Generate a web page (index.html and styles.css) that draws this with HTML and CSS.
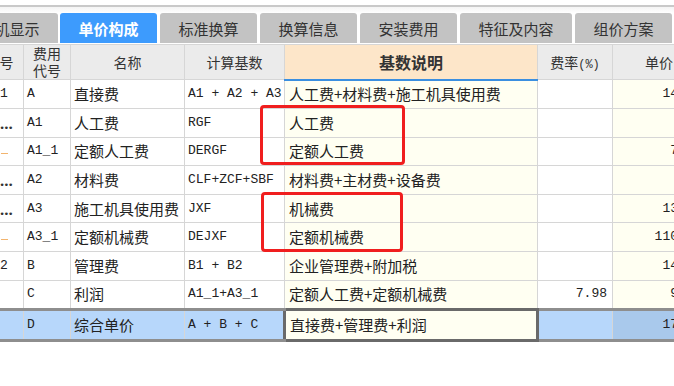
FILE: index.html
```html
<!DOCTYPE html>
<html lang="zh-CN">
<head>
    <meta charset="UTF-8">
    <meta name="viewport" content="width=device-width, initial-scale=1.0">
    <title>单价构成</title>
    <link rel="stylesheet" href="styles.css">
</head>
<body>

<div class="page">
    <div class="top-strip"></div>

    <div class="tabs">
        <div class="tab tab-first">工料机显示</div>
        <div class="tab active">单价构成</div>
        <div class="tab">标准换算</div>
        <div class="tab">换算信息</div>
        <div class="tab">安装费用</div>
        <div class="tab">特征及内容</div>
        <div class="tab">组价方案</div>
    </div>

    <table class="grid">
        <colgroup>
            <col class="c-no">
            <col class="c-code">
            <col class="c-name">
            <col class="c-base">
            <col class="c-desc">
            <col class="c-rate">
            <col class="c-price">
        </colgroup>
        <thead>
            <tr>
                <th>序号</th>
                <th class="two-line">费用<br>代号</th>
                <th>名称</th>
                <th>计算基数</th>
                <th class="desc-head">基数说明</th>
                <th>费率<span class="pct">(%)</span></th>
                <th class="price-head">单价</th>
            </tr>
        </thead>
        <tbody>
            <tr>
                <td class="no mono">1</td>
                <td class="mono">A</td>
                <td>直接费</td>
                <td class="mono">A1 + A2 + A3</td>
                <td class="desc">人工费+材料费+施工机具使用费</td>
                <td class="rate mono"></td>
                <td class="price mono">1436.52</td>
            </tr>
            <tr>
                <td class="no"><span class="dots">…</span></td>
                <td class="mono">A1</td>
                <td>人工费</td>
                <td class="mono">RGF</td>
                <td class="desc">人工费</td>
                <td class="rate mono"></td>
                <td class="price mono">96.35</td>
            </tr>
            <tr>
                <td class="no"><span class="tree-line"></span></td>
                <td class="mono">A1_1</td>
                <td>定额人工费</td>
                <td class="mono">DERGF</td>
                <td class="desc">定额人工费</td>
                <td class="rate mono"></td>
                <td class="price mono">712.40</td>
            </tr>
            <tr>
                <td class="no"><span class="dots">…</span></td>
                <td class="mono">A2</td>
                <td>材料费</td>
                <td class="mono">CLF+ZCF+SBF</td>
                <td class="desc">材料费+主材费+设备费</td>
                <td class="rate mono"></td>
                <td class="price mono">85.10</td>
            </tr>
            <tr>
                <td class="no"><span class="dots">…</span></td>
                <td class="mono">A3</td>
                <td>施工机具使用费</td>
                <td class="mono">JXF</td>
                <td class="desc">机械费</td>
                <td class="rate mono"></td>
                <td class="price mono">1327.84</td>
            </tr>
            <tr>
                <td class="no"><span class="tree-line"></span></td>
                <td class="mono">A3_1</td>
                <td>定额机械费</td>
                <td class="mono">DEJXF</td>
                <td class="desc">定额机械费</td>
                <td class="rate mono"></td>
                <td class="price mono">11052.77</td>
            </tr>
            <tr>
                <td class="no mono">2</td>
                <td class="mono">B</td>
                <td>管理费</td>
                <td class="mono">B1 + B2</td>
                <td class="desc">企业管理费+附加税</td>
                <td class="rate mono"></td>
                <td class="price mono">1416.29</td>
            </tr>
            <tr>
                <td class="no mono"></td>
                <td class="mono">C</td>
                <td>利润</td>
                <td class="mono">A1_1+A3_1</td>
                <td class="desc">定额人工费+定额机械费</td>
                <td class="rate mono">7.98</td>
                <td class="price mono">942.61</td>
            </tr>
            <tr class="selected">
                <td class="no mono"></td>
                <td class="mono">D</td>
                <td>综合单价</td>
                <td class="mono">A + B + C</td>
                <td class="desc current">直接费+管理费+利润</td>
                <td class="rate mono"></td>
                <td class="price mono">1795.42</td>
            </tr>
        </tbody>
    </table>

    <!-- highlight frames drawn over the grid -->
    <div class="mark mark-1"></div>
    <div class="mark mark-2"></div>
</div>

</body>
</html>
```

FILE: styles.css
```css
body {
    margin: 0;
    background: #fff;
    overflow: hidden;
    font-family: "Noto Sans CJK SC", "Noto Sans", sans-serif;
    color: #222;
}
.page {
    position: relative;
    width: 674px;
    height: 386px;
    overflow: hidden;
}
.top-strip {
    height: 13px;
    box-sizing: border-box;
    border-top: 5px solid #fff;
    background: linear-gradient(#c9c9c9 0, #c9c9c9 2px, #f4f4f4 2px, #fff 8px);
}
.tabs {
    display: flex;
    gap: 3px;
    height: 30px;
    margin-left: -54px;
}
.tab {
    width: 97px;
    flex: none;
    display: flex;
    align-items: center;
    justify-content: center;
    background: #c3c3c3;
    color: #333;
    font-size: 15px;
    border-radius: 3px 3px 0 0;
}
.tab-first {
    width: 112px;
    margin-right: -1px;
}
.tabs .tab:nth-child(6) {
    width: 112px;
}
.tab.active {
    background: #3d9bfd;
    color: #fff;
    font-weight: bold;
}
.grid {
    table-layout: fixed;
    border-collapse: collapse;
    width: 749px;
    margin-top: 1px;
    margin-left: -25px;
}
.c-no { width: 48px; }
.c-code { width: 47px; }
.c-name { width: 114px; }
.c-base { width: 100px; }
.c-desc { width: 253px; }
.c-rate { width: 75px; }
.c-price { width: 112px; }
th, td {
    border: 1px solid #d6d6d6;
    padding: 0 3px;
    white-space: nowrap;
    overflow: hidden;
}
th {
    height: 33px;
    background: #ebebeb;
    color: #333;
    font-size: 14px;
    font-weight: normal;
    text-align: center;
}
th.two-line {
    line-height: 17px;
}
th.desc-head {
    background: #fde6c9;
    font-size: 16px;
    font-weight: bold;
    border-bottom: 2px solid #3b8fe0;
}
th.price-head {
    padding-right: 22px;
}
.pct {
    font-family: "Liberation Mono", monospace;
    font-size: 12px;
}
td {
    height: 27.6px;
    padding-top: 0;
    padding-bottom: 0;
    line-height: 20px;
    font-size: 15px;
    text-align: left;
    background: #fff;
}
td.mono {
    font-family: "Liberation Mono", "DejaVu Sans Mono", monospace;
    font-size: 13px;
}
td.no {
    padding-left: 24px;
}
td.desc {
    padding-left: 4px;
    background: #fffff2;
}
td.rate {
    text-align: right;
    padding-right: 5px;
}
td.price {
    text-align: right;
    padding-right: 7px;
    background: #fffff2;
}
.dots {
    font-family: "Noto Sans", sans-serif;
    font-size: 15px;
    font-weight: bold;
    color: #333;
}
.tree-line {
    display: inline-block;
    width: 7px;
    height: 1px;
    margin-left: 1px;
    background: #f2b46e;
    vertical-align: middle;
}
tr.selected td {
    background: #b7d7fb;
    border-top: 3px solid #8e8e8e;
    border-bottom: 3px solid #8e8e8e;
}
tr.selected td.price {
    background: #a9c9ec;
}
tr.selected td.current {
    background: #fffff2;
    border: 3px solid #6a6a6a;
}
.mark {
    position: absolute;
    border: 3px solid #f01e1e;
    border-radius: 4px;
    box-sizing: border-box;
}
.mark-1 {
    left: 260px;
    top: 105px;
    width: 145px;
    height: 60px;
}
.mark-2 {
    left: 261px;
    top: 192px;
    width: 142px;
    height: 60px;
}
```
